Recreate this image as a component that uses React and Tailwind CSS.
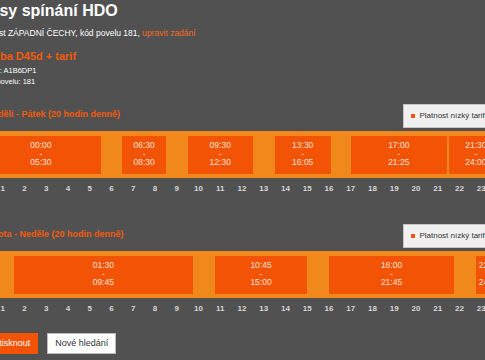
import React from 'react';

const HOUR = 21.75;

const weekday = [
  ['00:00', '05:30'],
  ['06:30', '08:30'],
  ['09:30', '12:30'],
  ['13:30', '16:05'],
  ['17:00', '21:25'],
  ['21:30', '24:00'],
];

const weekend = [
  ['00:00', '00:30'],
  ['01:30', '09:45'],
  ['10:45', '15:00'],
  ['16:00', '21:45'],
  ['22:45', '24:00'],
];

const toHours = (t) => {
  const [h, m] = t.split(':').map(Number);
  return h + m / 60;
};

function Legend() {
  return (
    <div className="flex items-center h-[24px] pl-[7px] pr-[10px] bg-[#f0f0f0] border border-[#c8c8c8] text-[8px] text-[#333]">
      <span className="w-[4px] h-[4px] bg-[#f25305] mr-[4px]" />
      <span className="whitespace-nowrap">Platnost nízký tarif (NT)</span>
    </div>
  );
}

function Section({ title, blocks, top }) {
  return (
    <div className={top}>
      {/* hlavička s legendou */}
      <div className="flex items-center justify-between">
        <h3 className="text-[9px] font-bold text-[#f25a0c] leading-none -mt-[3px]">{title}</h3>
        <div className="-mr-[11px]">
          <Legend />
        </div>
      </div>

      {/* časová osa */}
      <div className="relative mt-[3px] h-[47px] bg-[#f0881c]">
        {blocks.map(([from, to]) => {
          const a = toHours(from);
          const b = toHours(to);
          return (
            <div
              key={from}
              className="absolute top-[5px] bottom-[4px] bg-[#f25305] flex flex-col items-center pt-[5px] text-[8.5px] leading-[8.5px] text-[#fbe2d4]"
              style={{ left: a * HOUR, width: (b - a) * HOUR }}
            >
              <span>{from}</span>
              <span>-</span>
              <span>{to}</span>
            </div>
          );
        })}
      </div>

      {/* hodiny */}
      <div className="flex mt-[5px] -ml-[10.875px] w-[543.75px] text-[8px] leading-[12px] font-bold text-[#d6d6d6]">
        {Array.from({ length: 25 }, (_, i) => (
          <span key={i} className="flex-1 text-center">{i}</span>
        ))}
      </div>
    </div>
  );
}

export default function App() {
  return (
    <div className="w-[485px] h-[360px] overflow-hidden bg-[#515151] font-['Liberation_Sans',Arial,sans-serif]">
      <div className="-ml-[19px] w-[522px] pt-[3px]">
        <h1 className="text-[16px] leading-none font-bold text-white -ml-[2px]">Časy spínání HDO</h1>
        <p className="mt-[8px] text-[8.5px] leading-[12px] text-white">
          Oblast ZÁPADNÍ ČECHY, kód povelu 181, <span className="text-[#f26a22]">upravit zadání</span>
        </p>
        <h2 className="mt-[10px] text-[11px] leading-[14px] font-bold text-[#f25a0c]">Sazba D45d + tarif</h2>
        <p className="mt-[2px] text-[7.5px] leading-[11px] text-white">Povel: A1B6DP1</p>
        <p className="text-[7.5px] leading-[11px] text-white">Kód povelu: 181</p>

        <Section title="Pondělí - Pátek (20 hodin denně)" blocks={weekday} top="mt-[17px]" />
        <Section title="Sobota - Neděle (20 hodin denně)" blocks={weekend} top="mt-[29px]" />

        <div className="flex gap-[9px] mt-[18px]">
          <button className="h-[21px] px-[8px] bg-[#f25305] text-white text-[9px]">Vytisknout</button>
          <button className="h-[21px] px-[7px] bg-white border border-[#bbb] text-[#333] text-[9px]">Nové hledání</button>
        </div>
      </div>
    </div>
  );
}
